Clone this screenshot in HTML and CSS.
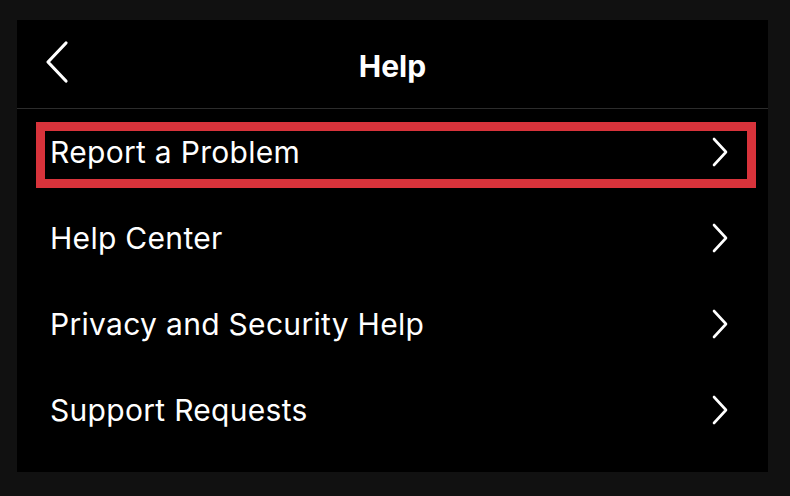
FILE: index.html
```html
<!DOCTYPE html>
<html>
<head>
<meta charset="utf-8">
<link rel="stylesheet" href="styles.css">
</head>
<body>
<div class="panel">
  <div class="header">
    <div class="back">
      <svg width="26" height="44" viewBox="0 0 26 44"><path d="M22 3 L4 22 L22 41" fill="none" stroke="#fff" stroke-width="3.2" stroke-linecap="round" stroke-linejoin="round"/></svg>
    </div>
    <div class="title">Help</div>
    <div class="spacer"></div>
  </div>
  <ul class="list">
    <li class="row highlighted"><span class="label">Report a Problem</span><svg class="chev" width="18" height="30" viewBox="0 0 18 30"><path d="M3 2 L15 15 L3 28" fill="none" stroke="#fff" stroke-width="2.6" stroke-linecap="round" stroke-linejoin="round"/></svg></li>
    <li class="row"><span class="label">Help Center</span><svg class="chev" width="18" height="30" viewBox="0 0 18 30"><path d="M3 2 L15 15 L3 28" fill="none" stroke="#fff" stroke-width="2.6" stroke-linecap="round" stroke-linejoin="round"/></svg></li>
    <li class="row"><span class="label">Privacy and Security Help</span><svg class="chev" width="18" height="30" viewBox="0 0 18 30"><path d="M3 2 L15 15 L3 28" fill="none" stroke="#fff" stroke-width="2.6" stroke-linecap="round" stroke-linejoin="round"/></svg></li>
    <li class="row"><span class="label">Support Requests</span><svg class="chev" width="18" height="30" viewBox="0 0 18 30"><path d="M3 2 L15 15 L3 28" fill="none" stroke="#fff" stroke-width="2.6" stroke-linecap="round" stroke-linejoin="round"/></svg></li>
  </ul>
</div>
</body>
</html>
```

FILE: styles.css
```css
html, body {
  margin: 0;
  padding: 0;
  background: #111111;
  width: 790px;
  height: 496px;
  overflow: hidden;
}
body {
  font-family: Inter, "Liberation Sans", sans-serif;
  color: #fff;
}
.panel {
  margin-left: 17px;
  margin-top: 20px;
  width: 751px;
  height: 452px;
  background: #000;
  display: flex;
  flex-direction: column;
}
.header {
  height: 88px;
  display: grid;
  grid-template-columns: 1fr auto 1fr;
  align-items: center;
  border-bottom: 1px solid #2c2c2c;
  flex-shrink: 0;
}
.back {
  padding-left: 27px;
  display: flex;
  align-items: center;
  margin-top: -4px;
}
.back svg { display: block; }
.title {
  font-weight: 700;
  font-size: 30px;
  line-height: 1;
  margin-top: 4px;
}
.list {
  list-style: none;
  margin: 0;
  padding: 0;
}
.row {
  position: relative;
  height: 86px;
  display: flex;
  align-items: center;
  justify-content: space-between;
  padding-left: 33px;
  padding-right: 39px;
}
.label {
  font-size: 30px;
  line-height: 1;
  letter-spacing: 0.3px;
}
.chev { display: block; }
.highlighted::after {
  content: "";
  position: absolute;
  left: 19px;
  top: 13px;
  width: 720px;
  height: 66px;
  box-sizing: border-box;
  border: 9px solid #d8333b;
  pointer-events: none;
}
```
